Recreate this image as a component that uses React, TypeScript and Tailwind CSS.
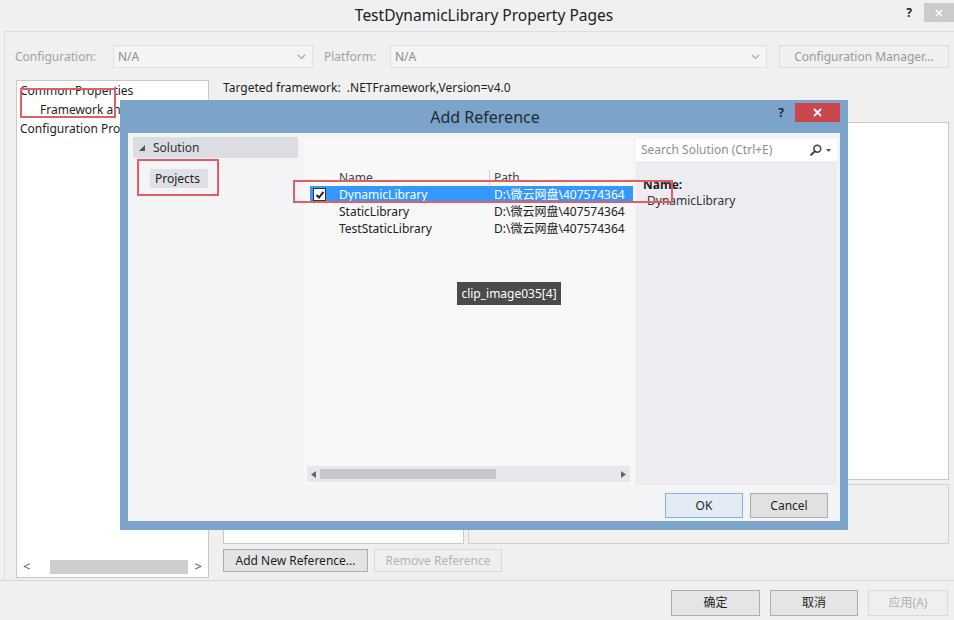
import React from 'react'

const font = "font-['Noto_Sans','Noto_Sans_CJK_SC',sans-serif]"

function Chevron() {
  return (
    <svg width="9" height="6" viewBox="0 0 9 6" className="shrink-0">
      <path d="M1 1 L4.5 4.5 L8 1" fill="none" stroke="#a8a8a8" strokeWidth="1.2" />
    </svg>
  )
}

function Dropdown({ width }: { width: string }) {
  return (
    <div className={`${width} h-[23px] flex items-center justify-between border border-[#e1e1e1] bg-[#f4f4f4] pl-[4px] pr-[6px]`}>
      <span className="text-[#8c8c8c]">N/A</span>
      <Chevron />
    </div>
  )
}

function Btn({ children, className = '' }: { children: React.ReactNode; className?: string }) {
  return (
    <div className={`flex items-center justify-center border ${className}`}>{children}</div>
  )
}

function Magnifier() {
  return (
    <svg width="12" height="12" viewBox="0 0 12 12">
      <circle cx="7.3" cy="4.7" r="3.4" fill="none" stroke="#444" strokeWidth="1.6" />
      <path d="M4.9 7.1 L1.2 10.8" stroke="#444" strokeWidth="2" strokeLinecap="round" />
    </svg>
  )
}

function CheckBox() {
  return (
    <div className="w-[13px] h-[13px] bg-white border border-[#333] flex items-center justify-center">
      <svg width="10" height="10" viewBox="0 0 10 10">
        <path d="M1.5 5 L4 7.5 L8.5 1.8" fill="none" stroke="#222" strokeWidth="2" />
      </svg>
    </div>
  )
}

const projects = ['DynamicLibrary', 'StaticLibrary', 'TestStaticLibrary']

function AddReferenceDialog() {
  return (
    <div className="absolute left-[120px] top-[100px] w-[728px] h-[430px] bg-[#7ca3c9] flex flex-col">
      <div className="h-[33px] flex items-center">
        <div className="flex-1" />
        <span className="text-[16px] text-[#1f2b38] pl-[10px]">Add Reference</span>
        <div className="flex-1 flex justify-end items-start self-start pt-[3px] pr-[8px]">
          <span className="font-bold text-[12px] text-[#1f2b38] mr-[11px] mt-[1px]">?</span>
          <div className="w-[45px] h-[19px] bg-[#c9474d] flex items-center justify-center">
            <svg width="9" height="9" viewBox="0 0 9 9">
              <path d="M1 1 L8 8 M8 1 L1 8" stroke="#fff" strokeWidth="1.8" />
            </svg>
          </div>
        </div>
      </div>

      <div className="mx-[8px] h-[388px] bg-[#f4f4f7] flex flex-col">
        <div className="h-[352px] flex pt-[4px]">
          {/* left: solution tree */}
          <div className="w-[172px] pl-[5px]">
            <div className="w-[165px] h-[21px] bg-[#dcdde3] flex items-center pl-[6px]">
              <svg width="6" height="6" viewBox="0 0 6 6" className="mr-[8px]">
                <path d="M6 0 L6 6 L0 6 Z" fill="#555" />
              </svg>
              <span className="text-[#333]">Solution</span>
            </div>
            <div className="mt-[11px] ml-[17px] w-[58px] h-[19px] bg-[#dfe0e5] flex items-center pl-[5px] text-[#222]">
              Projects
            </div>
          </div>

          {/* middle: project list */}
          <div className="ml-[4px] w-[329px] h-[348px] bg-[#f7f7f8] flex flex-col">
            <div className="mt-[32px] h-[17px] flex items-center">
              <span className="ml-[35px] w-[150px] text-[#444]">Name</span>
              <div className="w-px h-[15px] bg-[#cfcfcf]" />
              <span className="ml-[4px] text-[#444]">Path</span>
            </div>
            {projects.map((p, i) => {
              const sel = i === 0
              return (
                <div
                  key={p}
                  className={`ml-[6px] h-[17px] flex items-center ${sel ? 'bg-[#3399ff] text-white' : 'text-[#222]'}`}
                >
                  <div className="w-[29px] pl-[3px]">{sel && <CheckBox />}</div>
                  <span className="w-[155px]">{p}</span>
                  <span className="whitespace-nowrap overflow-hidden">D:\微云网盘\407574364</span>
                </div>
              )
            })}
            <div className="flex-1" />
            <div className="mx-[3px] mb-[3px] h-[16px] bg-[#e8e8ec] flex items-center px-[4px]">
              <svg width="5" height="7" viewBox="0 0 5 7">
                <path d="M5 0 L0 3.5 L5 7 Z" fill="#666" />
              </svg>
              <div className="ml-[4px] w-[176px] h-[10px] bg-[#c6c7cd]" />
              <div className="flex-1" />
              <svg width="5" height="7" viewBox="0 0 5 7">
                <path d="M0 0 L5 3.5 L0 7 Z" fill="#666" />
              </svg>
            </div>
          </div>

          {/* right: search + details */}
          <div className="ml-[3px] w-[201px] flex flex-col">
            <div className="mt-[2px] h-[22px] bg-white flex items-center pl-[5px] pr-[6px]">
              <span className="text-[#8e8e8e] flex-1">Search Solution (Ctrl+E)</span>
              <Magnifier />
              <svg width="5" height="3" viewBox="0 0 5 3" className="ml-[4px]">
                <path d="M0 0 L5 0 L2.5 3 Z" fill="#555" />
              </svg>
            </div>
            <div className="flex-1 bg-[#ededf1] pl-[7px] pt-[16px] leading-[16px]">
              <div className="font-bold text-[#222]">Name:</div>
              <div className="pl-[4px] text-[#333]">DynamicLibrary</div>
            </div>
          </div>
        </div>

        <div className="h-[36px] flex items-start justify-end pt-[8px] pr-[12px] gap-[7px]">
          <Btn className="w-[78px] h-[25px] border-[#7eb4ea] bg-[#e3ebf4]">OK</Btn>
          <Btn className="w-[78px] h-[25px] border-[#acacac] bg-[#e1e1e1]">Cancel</Btn>
        </div>
      </div>
    </div>
  )
}

export default function App() {
  return (
    <div className={`relative w-[954px] h-[620px] overflow-hidden bg-[#f0f0f0] text-[12px] text-[#1e1e1e] ${font}`}>
      {/* window title */}
      <div className="h-[31px] flex items-start">
        <div className="flex-1" />
        <span className="text-[15.5px] text-[#222] mt-[4px] pl-[14px]">TestDynamicLibrary Property Pages</span>
        <div className="flex-1 flex justify-end items-start pt-[3px]">
          <span className="font-bold text-[12px] mr-[12px] mt-[1px]">?</span>
          <div className="w-[30px] h-[19px] bg-[#cbcbcb] flex items-center justify-center">
            <svg width="8" height="8" viewBox="0 0 8 8">
              <path d="M1 1 L7 7 M7 1 L1 7" stroke="#fff" strokeWidth="1.5" />
            </svg>
          </div>
        </div>
      </div>

      <div className="ml-[4px] border-t border-l border-[#dedede] h-[549px] flex flex-col">
        {/* configuration row */}
        <div className="mt-[13px] h-[23px] flex items-center">
          <span className="ml-[10px] w-[98px] text-[#a3a3a3]">Configuration:</span>
          <Dropdown width="w-[200px]" />
          <span className="ml-[11px] w-[66px] text-[#a3a3a3]">Platform:</span>
          <Dropdown width="w-[377px]" />
          <Btn className="ml-[12px] w-[170px] h-[23px] border-[#dcdcdc] bg-[#f0f0f0] text-[#9a9a9a]">Configuration Manager...</Btn>
        </div>

        {/* body */}
        <div className="mt-[12px] flex">
          {/* tree */}
          <div className="ml-[11px] w-[193px] h-[498px] bg-white border border-[#c9c9c9] flex flex-col">
            <div className="pl-[3px] leading-[19px]">
              <div>Common Properties</div>
              <div className="pl-[20px]">Framework and References</div>
              <div>Configuration Properties</div>
            </div>
            <div className="flex-1" />
            <div className="h-[20px] flex items-center px-[6px] text-[#555]">
              <span className="text-[13px]">&lt;</span>
              <div className="ml-[20px] w-[138px] h-[14px] bg-[#cdcdcd]" />
              <div className="flex-1" />
              <span className="text-[13px]">&gt;</span>
            </div>
          </div>

          {/* right page */}
          <div className="ml-[14px] w-[726px] flex flex-col">
            <div className="h-[42px] pt-[1px] leading-[14px]">
              Targeted framework:&nbsp;&nbsp;.NETFramework,Version=v4.0
            </div>
            <div className="h-[358px] bg-white border border-[#c9c9c9]" />
            <div className="mt-[4px] h-[60px] flex gap-[4px]">
              <div className="w-[241px] bg-white border border-[#c9c9c9]" />
              <div className="flex-1 bg-[#f0f0f0] border border-[#d0d0d0]" />
            </div>
            <div className="mt-[5px] flex gap-[6px]">
              <Btn className="w-[145px] h-[23px] border-[#adadad] bg-[#e4e4e4]">Add New Reference...</Btn>
              <Btn className="w-[128px] h-[23px] border-[#d9d9d9] bg-[#efefef] text-[#b3b3b3]">Remove Reference</Btn>
            </div>
          </div>
        </div>
      </div>

      {/* bottom buttons */}
      <div className="border-t border-[#d6d6d6] h-[40px] flex items-start justify-end pt-[9px] pr-[6px] gap-[10px]">
        <Btn className="w-[89px] h-[26px] border-[#adadad] bg-[#e5e5e5]">确定</Btn>
        <Btn className="w-[88px] h-[26px] border-[#adadad] bg-[#e5e5e5]">取消</Btn>
        <Btn className="w-[80px] h-[26px] border-[#dadada] bg-[#efefef] text-[#b0b0b0]">应用(A)</Btn>
      </div>

      {/* annotation behind dialog */}
      <div className="absolute left-[20px] top-[88px] w-[96px] h-[30px] border-2 border-[#e25e63]" />

      <AddReferenceDialog />

      {/* annotations over the dialog */}
      <div className="absolute left-[137px] top-[159px] w-[82px] h-[37px] border-2 border-[#e25e63]" />
      <div className="absolute left-[293px] top-[180px] w-[380px] h-[23px] border-2 border-[#e25e63]" />

      {/* screenshot tooltip */}
      <div className="absolute left-[457px] top-[282px] w-[104px] h-[23px] bg-[#4b4b4b] text-white flex items-center justify-center">
        clip_image035[4]
      </div>
    </div>
  )
}
